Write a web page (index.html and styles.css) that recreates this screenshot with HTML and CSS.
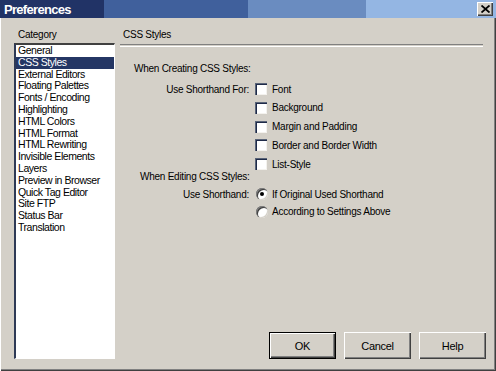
FILE: index.html
```html
<!DOCTYPE html>
<html lang="en">

  <head>
    <meta charset="UTF-8">
    <meta name="viewport" content="width=device-width, initial-scale=1.0">
    <title>Preferences</title>
    <link rel="stylesheet" href="styles.css">
  </head>

  <body>
    <div class="window">
      <div class="titlebar">
        <span class="title">Preferences</span>
        <button class="close">
          <svg width="9" height="8" viewBox="0 0 9 8">
            <path d="M0.5 0.5 L8.5 7.5 M8.5 0.5 L0.5 7.5" stroke="#000" stroke-width="1.8" fill="none"/>
          </svg>
        </button>
      </div>

      <div class="main">
        <div class="sidebar">
          <div class="caption">Category</div>
          <ul class="listbox">
            <li>General</li>
            <li class="selected">CSS Styles</li>
            <li>External Editors</li>
            <li>Floating Palettes</li>
            <li>Fonts / Encoding</li>
            <li>Highlighting</li>
            <li>HTML Colors</li>
            <li>HTML Format</li>
            <li>HTML Rewriting</li>
            <li>Invisible Elements</li>
            <li>Layers</li>
            <li>Preview in Browser</li>
            <li>Quick Tag Editor</li>
            <li>Site FTP</li>
            <li>Status Bar</li>
            <li>Translation</li>
          </ul>
        </div>

        <div class="panel">
          <div class="panel-title">CSS Styles</div>
          <div class="rule"></div>

          <div class="group-title creating">When Creating CSS Styles:</div>
          <div class="options checks">
            <span class="opt-label">Use Shorthand For:</span>
            <label class="opt"><span class="check"></span>Font</label>
            <label class="opt"><span class="check"></span>Background</label>
            <label class="opt"><span class="check"></span>Margin and Padding</label>
            <label class="opt"><span class="check"></span>Border and Border Width</label>
            <label class="opt"><span class="check"></span>List-Style</label>
          </div>

          <div class="group-title editing">When Editing CSS Styles:</div>
          <div class="options radios">
            <span class="opt-label">Use Shorthand:</span>
            <label class="opt"><span class="radio on"></span>If Original Used Shorthand</label>
            <label class="opt"><span class="radio"></span>According to Settings Above</label>
          </div>

          <div class="buttons">
            <button class="btn default">OK</button>
            <button class="btn">Cancel</button>
            <button class="btn">Help</button>
          </div>
        </div>
      </div>
    </div>
  </body>

</html>
```

FILE: styles.css
```css
body {
  margin: 0;
  background-color: #d4d0c8;
  font-family: "Liberation Sans", Arial, sans-serif;
  font-size: 10px;
  letter-spacing: -0.25px;
  color: #000;
}

.window {
  display: flex;
  flex-direction: column;
  width: 496px;
  height: 371px;
  box-sizing: border-box;
  padding-bottom: 2px;
  background-color: #d4d0c8;
  box-shadow: inset 1px 0 #fff, inset -1px -1px #404040, inset -2px -2px #808080;
}

.titlebar {
  display: flex;
  align-items: center;
  justify-content: space-between;
  height: 18px;
  padding: 0 3px 0 4px;
  background: linear-gradient(to right,
    #213366 0, #213366 104px,
    #40609c 104px, #40609c 248px,
    #6a8cc0 248px, #6a8cc0 366px,
    #94b6e3 366px);
}

.title {
  color: #fff;
  font-size: 13px;
  font-weight: bold;
  letter-spacing: -0.7px;
}

.close {
  display: flex;
  align-items: center;
  justify-content: center;
  width: 16px;
  height: 14px;
  padding: 0;
  border: none;
  background-color: #d4d0c8;
  box-shadow: inset 1px 1px #fff, inset -1px -1px #404040, inset -2px -2px #808080;
}

.main {
  flex: 1;
  display: flex;
  padding: 11px 0 10px 14px;
}

.sidebar {
  display: flex;
  flex-direction: column;
  width: 101px;
}

.caption {
  line-height: 12px;
  padding-left: 4px;
  margin-bottom: 2px;
}

.listbox {
  flex: 1;
  margin: 0;
  padding: 0;
  list-style: none;
  background-color: #fff;
  border-top: 2px solid #404040;
  border-left: 2px solid #2e3a56;
  border-bottom: 1px solid #fff;
  border-right: 1px solid #fff;
  box-shadow: 0 1px #d4d0c8;
  font-size: 10.5px;
  letter-spacing: -0.45px;
}

.listbox li {
  line-height: 11.8px;
  padding-left: 2px;
  white-space: nowrap;
}

.listbox li.selected {
  background-color: #243664;
  color: #fff;
}

.panel {
  flex: 1;
  display: flex;
  flex-direction: column;
  margin-left: 5px;
  margin-right: 10px;
}

.panel-title {
  line-height: 12px;
  padding-left: 3px;
}

.rule {
  height: 1px;
  margin: 3px 3px 0 0;
  border-top: 1px solid #808080;
  border-bottom: 1px solid #fff;
}

.group-title {
  line-height: 12px;
}

.creating {
  margin-top: 16px;
  padding-left: 14px;
}

.editing {
  margin-top: -2.5px;
  padding-left: 20px;
}

.options {
  display: grid;
  grid-template-columns: 129px 1fr;
  column-gap: 6px;
}

.checks {
  margin-top: 4.75px;
  grid-auto-rows: 18.75px;
}

.radios {
  margin-top: 2.25px;
  grid-auto-rows: 17.5px;
}

.opt-label {
  grid-row: 1;
  grid-column: 1;
  align-self: center;
  text-align: right;
}

.opt {
  grid-column: 2;
  display: flex;
  align-items: center;
}

.check {
  width: 12px;
  height: 12px;
  box-sizing: border-box;
  margin-right: 5px;
  background-color: #fff;
  box-shadow: inset 1px 1px #5a6478, inset 2px 2px #1e2a48, inset -1px -1px #f4f2ee;
}

.radio {
  position: relative;
  width: 12px;
  height: 12px;
  margin: 0 4px 0 1px;
  border-radius: 50%;
  background-color: #fff;
  box-shadow: inset 1px 1px #808080, inset 2px 2px #404040, inset -1px -1px #d4d0c8;
}

.radio.on::after {
  content: "";
  position: absolute;
  left: 4px;
  top: 4px;
  width: 4px;
  height: 4px;
  border-radius: 50%;
  background-color: #000;
}

.buttons {
  display: flex;
  justify-content: flex-end;
  gap: 8px;
  margin-top: auto;
}

.btn {
  width: 67px;
  height: 27px;
  padding: 0;
  border: none;
  background-color: #d4d0c8;
  font-family: "Liberation Sans", Arial, sans-serif;
  font-size: 11px;
  letter-spacing: -0.3px;
  color: #000;
  box-shadow: inset 1px 1px #fff, inset -1px -1px #404040, inset -2px -2px #808080;
}

.btn.default {
  box-shadow: inset 0 0 0 1px #000, inset 2px 2px #fff, inset -2px -2px #404040, inset -3px -3px #808080;
}
```
